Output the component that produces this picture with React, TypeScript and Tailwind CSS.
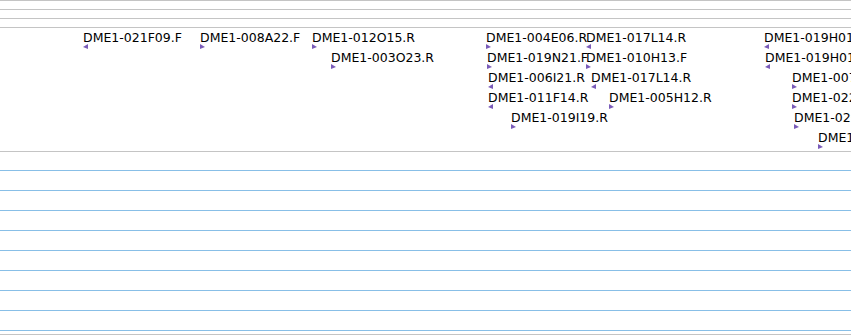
import React from 'react'

type Feature = { name: string; x: number; row: number; dir: 'L' | 'R' }

const features: Feature[] = [
  { name: 'DME1-021F09.F', x: 83, row: 0, dir: 'L' },
  { name: 'DME1-008A22.F', x: 200, row: 0, dir: 'R' },
  { name: 'DME1-012O15.R', x: 312, row: 0, dir: 'R' },
  { name: 'DME1-003O23.R', x: 331, row: 1, dir: 'R' },
  { name: 'DME1-004E06.R', x: 486, row: 0, dir: 'R' },
  { name: 'DME1-017L14.R', x: 586, row: 0, dir: 'L' },
  { name: 'DME1-019N21.F', x: 487, row: 1, dir: 'R' },
  { name: 'DME1-010H13.F', x: 586, row: 1, dir: 'R' },
  { name: 'DME1-006I21.R', x: 488, row: 2, dir: 'L' },
  { name: 'DME1-017L14.R', x: 591, row: 2, dir: 'L' },
  { name: 'DME1-011F14.R', x: 488, row: 3, dir: 'L' },
  { name: 'DME1-005H12.R', x: 609, row: 3, dir: 'R' },
  { name: 'DME1-019I19.R', x: 511, row: 4, dir: 'R' },
  { name: 'DME1-019H01.F', x: 764, row: 0, dir: 'L' },
  { name: 'DME1-019H01.R', x: 765, row: 1, dir: 'L' },
  { name: 'DME1-007C18.R', x: 792, row: 2, dir: 'R' },
  { name: 'DME1-022K05.R', x: 792, row: 3, dir: 'R' },
  { name: 'DME1-020M11.R', x: 794, row: 4, dir: 'R' },
  { name: 'DME1-014B03.R', x: 818, row: 5, dir: 'R' },
]

function Arrow({ dir }: { dir: 'L' | 'R' }) {
  return (
    <svg width="6" height="6" viewBox="0 0 6 6" className="block">
      {dir === 'L' ? (
        <polygon points="5,0 5,5 0,3" fill="#7a5cb9" />
      ) : (
        <polygon points="0,0 0,5 5,3" fill="#7a5cb9" />
      )}
    </svg>
  )
}

function GrayLine() {
  return <div className="h-px bg-[#c4c4c4]" />
}

export default function App() {
  const blueRows = [19, 20, 20, 20, 20, 20, 20, 20, 20]
  return (
    <div className="w-[851px] h-[335px] overflow-hidden bg-white flex flex-col">
      <GrayLine />
      <div className="h-2" />
      <GrayLine />
      <div className="h-2" />
      <GrayLine />
      <div className="h-2" />
      <GrayLine />

      <div className="relative h-[123px] font-['DejaVu_Sans',sans-serif] text-[12.5px] text-black">
        {features.map((f, i) => (
          <div
            key={i}
            className="absolute flex flex-col items-start"
            style={{ left: f.x, top: 3 + f.row * 20 }}
          >
            <span className="leading-[13px] h-[13px] whitespace-nowrap">{f.name}</span>
            <Arrow dir={f.dir} />
          </div>
        ))}
      </div>

      <GrayLine />
      {blueRows.map((h, i) => (
        <div
          key={i}
          className={(i === 0 ? 'h-[19px]' : 'h-[20px]') + ' border-b border-[#88bfe7]'}
        />
      ))}
      <div className="h-[3px]" />
      <GrayLine />
    </div>
  )
}
